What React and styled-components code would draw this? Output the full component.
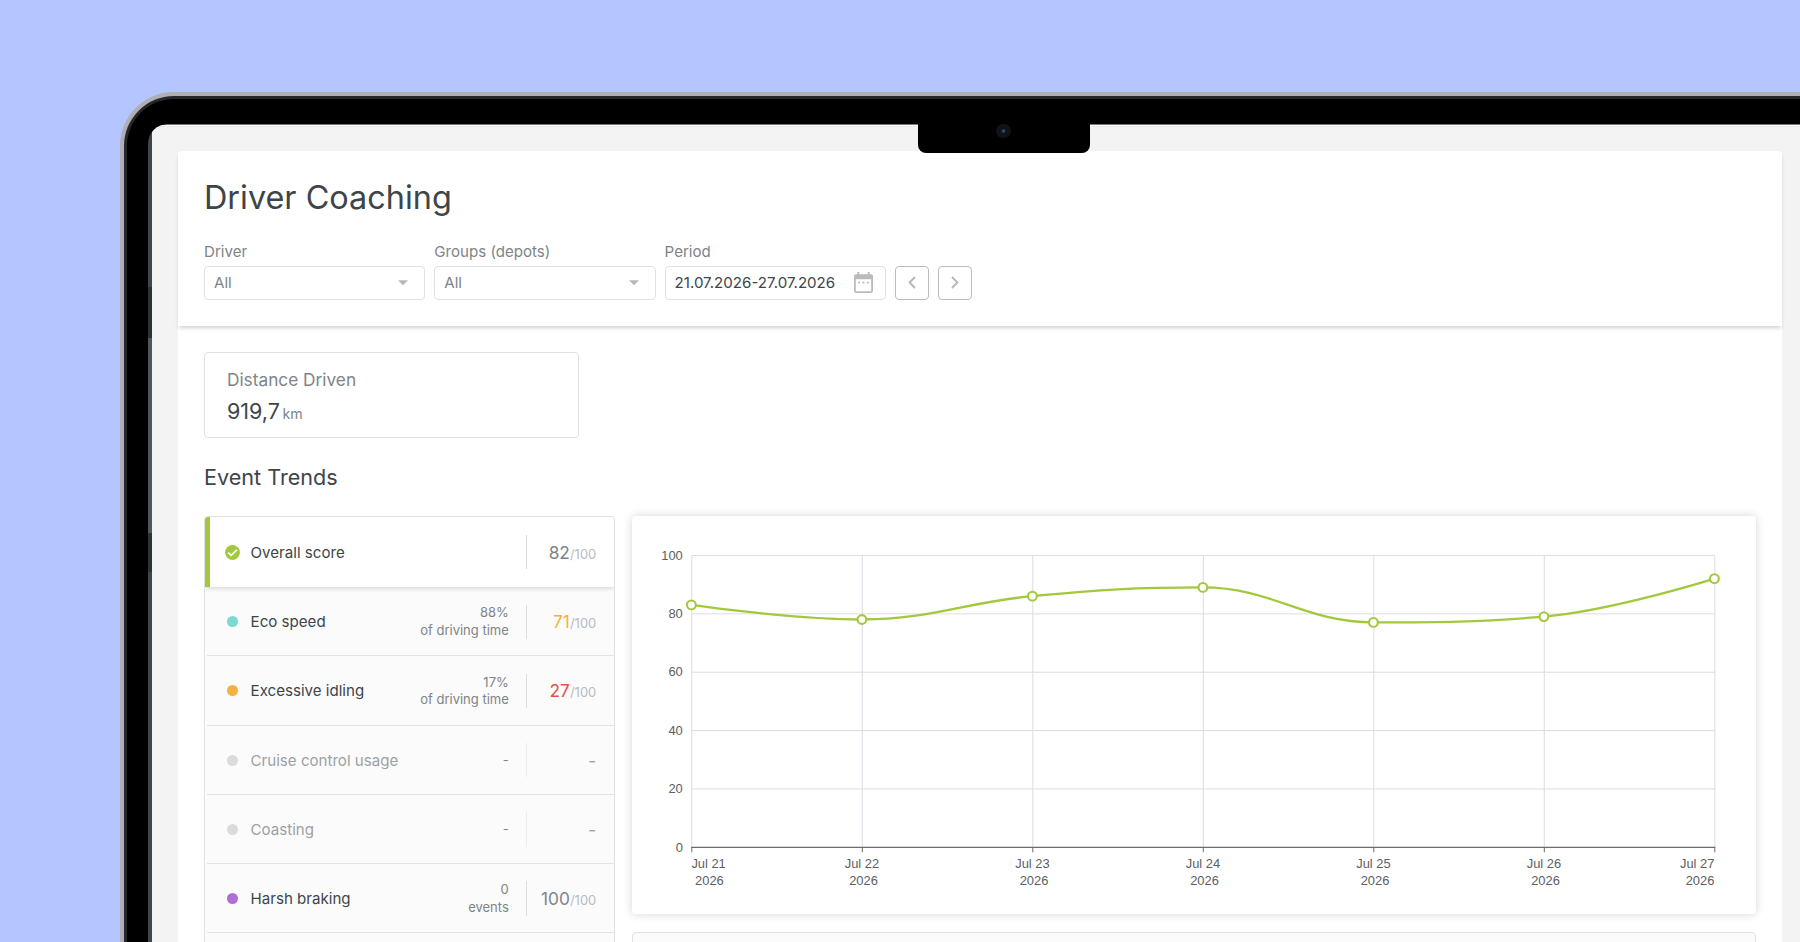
import React from 'react';
import styled, { createGlobalStyle } from 'styled-components';

const GlobalStyle = createGlobalStyle`
  * { box-sizing: border-box; }
  body {
    margin: 0;
    font-family: Inter, "Liberation Sans", sans-serif;
    color: #3d4549;
  }
`;

const events = [
  { name: 'Overall score', score: '82', selected: true },
  { name: 'Eco speed', dot: '#7bd9d1', value: '88%', unit: 'of driving time', score: '71', color: '#f3b13f' },
  { name: 'Excessive idling', dot: '#f4b140', value: '17%', unit: 'of driving time', score: '27', color: '#e25050' },
  { name: 'Cruise control usage', disabled: true },
  { name: 'Coasting', disabled: true },
  { name: 'Harsh braking', dot: '#b06dd6', value: '0', unit: 'events', score: '100' },
  { name: '', empty: true },
];

const trend = [
  { day: 'Jul 21', score: 83 },
  { day: 'Jul 22', score: 78 },
  { day: 'Jul 23', score: 86 },
  { day: 'Jul 24', score: 89 },
  { day: 'Jul 25', score: 77 },
  { day: 'Jul 26', score: 79 },
  { day: 'Jul 27', score: 92 },
];

const clamp = (v, a, b) => Math.min(Math.max(v, Math.min(a, b)), Math.max(a, b));

// bezier smoothing, control points never leave the box of their segment
function smoothPath(pts, smooth = 0.4) {
  let d = `M${pts[0][0]} ${pts[0][1]}`;
  let cp0 = pts[0];
  for (let i = 1; i < pts.length; i++) {
    const prev = pts[i - 1];
    const cur = pts[i];
    const next = pts[i + 1];
    let cp1 = cur;
    let nextCp = cur;
    if (next) {
      const lenPrev = Math.hypot(cur[0] - prev[0], cur[1] - prev[1]);
      const lenNext = Math.hypot(next[0] - cur[0], next[1] - cur[1]);
      const ratio = (smooth * lenNext) / (lenNext + lenPrev);
      nextCp = [0, 1].map((k) => clamp(cur[k] + (next[k] - prev[k]) * ratio, cur[k], next[k]));
      cp1 = [0, 1].map((k) => clamp(cur[k] - ((nextCp[k] - cur[k]) * lenPrev) / lenNext, prev[k], cur[k]));
      nextCp = [0, 1].map((k) => cur[k] + ((cur[k] - cp1[k]) * lenNext) / lenPrev);
    }
    d += `C${cp0} ${cp1} ${cur}`;
    cp0 = nextCp;
  }
  return d;
}

function TrendChart() {
  const left = 59.8;
  const top = 39.5;
  const step = 170.5;
  const height = 291.8;
  const y = (v) => top + height - (v / 100) * height;
  const points = trend.map((p, i) => [left - 0.4 + i * step, y(p.score) - 0.2]);
  const last = trend.length - 1;

  return (
    <ChartSvg width="1124" height="398" viewBox="0 0 1124 398">
      {[0, 20, 40, 60, 80, 100].map((v) => (
        <g key={v}>
          {v > 0 && <line x1={left} x2={left + step * 6} y1={y(v)} y2={y(v)} stroke="#dcdde4" />}
          <text x="50.8" y={y(v) + 4.2} textAnchor="end">{v}</text>
        </g>
      ))}
      {trend.map((p, i) => {
        const x = left + i * step;
        const edge = i === 0 ? 'start' : i === last ? 'end' : 'middle';
        const shift = i === 0 ? 3.7 : i === last ? 0 : 1.6;
        return (
          <g key={p.day}>
            <line x1={x} x2={x} y1={top} y2={top + height} stroke="#dcdde4" />
            <line x1={x} x2={x} y1={top + height} y2={top + height + 5} stroke="#6b6c70" />
            <text x={x - 0.4} y="352.4" textAnchor={edge}>{p.day}</text>
            <text x={x - 0.4 + shift} y="368.5" textAnchor={edge}>2026</text>
          </g>
        );
      })}
      <line x1={left - 0.5} x2={left + step * 6 + 0.5} y1={y(0)} y2={y(0)} stroke="#6b6c70" strokeWidth="1.15" />
      <path d={smoothPath(points)} fill="none" stroke="#a2c83c" strokeWidth="2.3" />
      {points.map(([cx, cy]) => (
        <circle key={cx} cx={cx} cy={cy} r="4.4" fill="#fff" stroke="#a2c83c" strokeWidth="2.1" />
      ))}
    </ChartSvg>
  );
}

function SelectField({ label, value }) {
  return (
    <Field>
      <Label>{label}</Label>
      <Input>
        {value}
        <Caret viewBox="0 0 10 5"><path d="M0 0H10L5 5Z" fill="#b5b8ba" /></Caret>
      </Input>
    </Field>
  );
}

function EventRow({ item }) {
  return (
    <Row $selected={item.selected}>
      <Marker>
        {item.selected ? (
          <svg width="15" height="15" viewBox="0 0 15 15">
            <circle cx="7.5" cy="7.5" r="7.4" fill="#a2c83c" />
            <path d="M3.2 7.6L6.2 10.4L11.9 4.8" fill="none" stroke="#fff" strokeWidth="1.7" />
          </svg>
        ) : (
          !item.empty && <Dot $color={item.dot} />
        )}
      </Marker>
      <Name $disabled={item.disabled}>{item.name}</Name>
      <Detail>
        {item.disabled ? '-' : item.value}
        {item.unit && <span>{item.unit}</span>}
      </Detail>
      {!item.empty && <Divider $faint={item.disabled} />}
      <Score $color={item.color} $disabled={item.disabled}>
        {item.disabled ? '-' : item.score}
        {item.score && <small>/100</small>}
      </Score>
    </Row>
  );
}

export default function App() {
  return (
    <Backdrop>
      <GlobalStyle />
      <Laptop>
        <Rim>
          <Bezel>
            <Notch>
              <Camera />
            </Notch>
            <Screen>
              <Page>
                <Header>
                  <Title>Driver Coaching</Title>
                  <Filters>
                    <SelectField label="Driver" value="All" />
                    <SelectField label="Groups (depots)" value="All" />
                    <Field>
                      <Label>Period</Label>
                      <Input $dark>
                        21.07.2026-27.07.2026
                        <Calendar viewBox="0 0 19 21">
                          <path
                            fillRule="evenodd"
                            d="M2 2.2H3.3V0H5.2V2.2H13.8V0H15.7V2.2H17A2 2 0 0 1 19 4.2V19A2 2 0 0 1 17 21H2A2 2 0 0 1 0 19V4.2A2 2 0 0 1 2 2.2ZM1.8 7.2V19.2H17.2V7.2ZM4.1 9.7H6V11.5H4.1ZM8.5 9.7H10.4V11.5H8.5ZM12.9 9.7H14.8V11.5H12.9Z"
                            fill="#b9bbbd"
                          />
                        </Calendar>
                      </Input>
                    </Field>
                    <ArrowButton>
                      <svg width="8" height="13" viewBox="0 0 8 13">
                        <path d="M7 1L1.6 6.5L7 12" fill="none" stroke="#b5b8ba" strokeWidth="1.9" />
                      </svg>
                    </ArrowButton>
                    <ArrowButton>
                      <svg width="8" height="13" viewBox="0 0 8 13">
                        <path d="M1 1L6.4 6.5L1 12" fill="none" stroke="#b5b8ba" strokeWidth="1.9" />
                      </svg>
                    </ArrowButton>
                  </Filters>
                </Header>
                <Content>
                  <Distance>
                    <DistanceLabel>Distance Driven</DistanceLabel>
                    <DistanceValue>919,7<small>km</small></DistanceValue>
                  </Distance>
                  <SectionTitle>Event Trends</SectionTitle>
                  <Trends>
                    <EventList>
                      {events.map((item) => <EventRow key={item.name} item={item} />)}
                    </EventList>
                    <Charts>
                      <ChartCard><TrendChart /></ChartCard>
                      <NextCard />
                    </Charts>
                  </Trends>
                </Content>
              </Page>
            </Screen>
          </Bezel>
        </Rim>
      </Laptop>
    </Backdrop>
  );
}

const Backdrop = styled.div`
  width: 1800px;
  height: 942px;
  padding: 92px 0 0 119.6px;
  overflow: hidden;
  background: #b4c5ff;
`;

const Laptop = styled.div`
  width: 1760px;
  height: 1000px;
  padding: 4px 0 0 4.4px;
  border-radius: 54px 0 0 0;
  background: #b0afb4;
`;

const Rim = styled.div`
  height: 100%;
  padding: 3px 0 0 3px;
  border-radius: 50px 0 0 0;
  background: #262729;
`;

const Bezel = styled.div`
  position: relative;
  height: 100%;
  padding: 25px 0 0 21.5px;
  border-radius: 47px 0 0 0;
  background: #000;
`;

const Notch = styled.div`
  position: absolute;
  z-index: 2;
  left: 790.7px;
  top: 20px;
  width: 172.3px;
  height: 33.5px;
  padding: 4.5px 1px 0 0;
  display: flex;
  justify-content: center;
  border-radius: 0 0 8px 8px;
  background: #000;
`;

const Camera = styled.div`
  width: 14.5px;
  height: 14.5px;
  border-radius: 50%;
  background: radial-gradient(circle, #24487f 0 1.3px, #111214 2.2px);
`;

const Screen = styled.div`
  height: 100%;
  padding: 27px 18px 0 29.5px;
  border-radius: 20px 0 0 0;
  background:
    linear-gradient(#40464c 163px, #2c3133 163px 214px, #51565d 214px 409px, #2d3235 409px 448px, #41464a 448px) 0 0 / 4px 100% no-repeat,
    linear-gradient(#777 0 1px, #fff 1px 2px, #e9e9e9 2px 3px, #f3f3f3 3px);
`;

const Page = styled.main`
  width: 1604px;
  height: 900px;
  border-radius: 4px;
  background: #fff;
`;

const Header = styled.header`
  height: 174.7px;
  padding: 27px 26px 0;
  border-radius: 4px 4px 0 0;
  box-shadow: 0 3px 4px -1px rgba(0, 0, 0, 0.18);
`;

const Title = styled.h1`
  margin: 0;
  font-size: 32.4px;
  line-height: 39px;
  font-weight: 400;
`;

const Filters = styled.div`
  display: flex;
  align-items: flex-end;
  gap: 8.8px;
  margin-top: 24.5px;
`;

const Field = styled.div`
  display: flex;
  flex-direction: column;
  width: 221.5px;
`;

const Label = styled.label`
  height: 24px;
  font-size: 15.1px;
  line-height: 20px;
  color: #7e8487;
`;

const Input = styled.div`
  display: flex;
  align-items: center;
  justify-content: space-between;
  height: 34.3px;
  padding: 0 12px 0 9px;
  border: 1px solid #dfe1e2;
  border-radius: 4px;
  font-size: 15.1px;
  color: ${(p) => (p.$dark ? '#3d4549' : '#7e8487')};
`;

const Caret = styled.svg`
  width: 10px;
  height: 5.5px;
  margin-right: 4px;
`;

const Calendar = styled.svg`
  width: 19px;
  height: 21px;
`;

const ArrowButton = styled.button`
  display: flex;
  align-items: center;
  justify-content: center;
  width: 34.2px;
  height: 34.3px;
  padding: 0;
  border: 1px solid #babcbe;
  border-radius: 4px;
  background: #fff;
`;

const Content = styled.section`
  padding: 26px 26px 0 26px;
`;

const Distance = styled.div`
  width: 375px;
  height: 86.5px;
  padding: 15px 22px;
  border: 1px solid #dfe1e2;
  border-radius: 4px;
`;

const DistanceLabel = styled.div`
  font-size: 17.25px;
  line-height: 23px;
  color: #7e8487;
`;

const DistanceValue = styled.div`
  margin-top: 5px;
  font-size: 21.5px;
  line-height: 30px;

  small {
    margin-left: 2.6px;
    font-size: 14.2px;
    color: #7e8487;
  }
`;

const SectionTitle = styled.h2`
  margin: 23.5px 0 0;
  font-size: 21.6px;
  line-height: 30px;
  font-weight: 400;
`;

const Trends = styled.div`
  display: flex;
  margin-top: 24.5px;
`;

const EventList = styled.div`
  width: 411.3px;
  height: 500px;
  border: 1px solid #dfe1e2;
  border-radius: 4px;
  overflow: hidden;
  background: #fbfbfb;
`;

const Row = styled.div`
  position: relative;
  display: flex;
  align-items: center;
  height: ${(p) => (p.$selected ? '70px' : '69.2px')};
  padding-right: 18px;
  border-left: ${(p) => (p.$selected ? '5px solid #a2c83c' : '0')};
  padding-left: ${(p) => (p.$selected ? '0' : '5px')};
  background: ${(p) => (p.$selected ? '#fff' : 'linear-gradient(#e1e2e3, #e1e2e3) 2px 100% / 100% 1px no-repeat')};
  box-shadow: ${(p) => (p.$selected ? '0 1px 5px rgba(0, 0, 0, 0.18)' : 'none')};
  z-index: ${(p) => (p.$selected ? 1 : 0)};
`;

const Marker = styled.div`
  display: flex;
  justify-content: center;
  width: 15px;
  margin: 0 10.8px 0 14.8px;
`;

const Dot = styled.i`
  width: 11px;
  height: 11px;
  border-radius: 50%;
  background: ${(p) => p.$color || '#dadbdb'};
`;

const Name = styled.div`
  flex: 1;
  font-size: 15.1px;
  color: ${(p) => (p.$disabled ? '#9da1a3' : '#3d4549')};
`;

const Detail = styled.div`
  display: flex;
  flex-direction: column;
  align-items: flex-end;
  font-size: 13px;
  line-height: 17.3px;
  color: #7e8487;
`;

const Divider = styled.i`
  width: 1px;
  height: 34.5px;
  margin-left: 17.5px;
  background: ${(p) => (p.$faint ? '#ececec' : '#dadcdd')};
`;

const Score = styled.div`
  width: 69px;
  font-size: 17.3px;
  text-align: right;
  color: ${(p) => p.$color || (p.$disabled ? '#9da1a3' : '#7e8487')};

  small {
    font-size: 13px;
    color: #b9bcbe;
  }
`;

const Charts = styled.div`
  display: flex;
  flex-direction: column;
  gap: 17.5px;
  margin-left: 16.7px;
`;

const ChartCard = styled.div`
  width: 1124px;
  height: 398px;
  border-radius: 4px;
  box-shadow: 0 0 10px rgba(0, 0, 0, 0.17);
`;

const ChartSvg = styled.svg`
  display: block;

  text {
    font-family: "Liberation Sans", Arial, sans-serif;
    font-size: 12.9px;
    fill: #5c5e63;
  }
`;

const NextCard = styled.div`
  height: 200px;
  border: 1px solid #dfe1e2;
  border-radius: 4px;
  background: #fbfbfb;
`;
